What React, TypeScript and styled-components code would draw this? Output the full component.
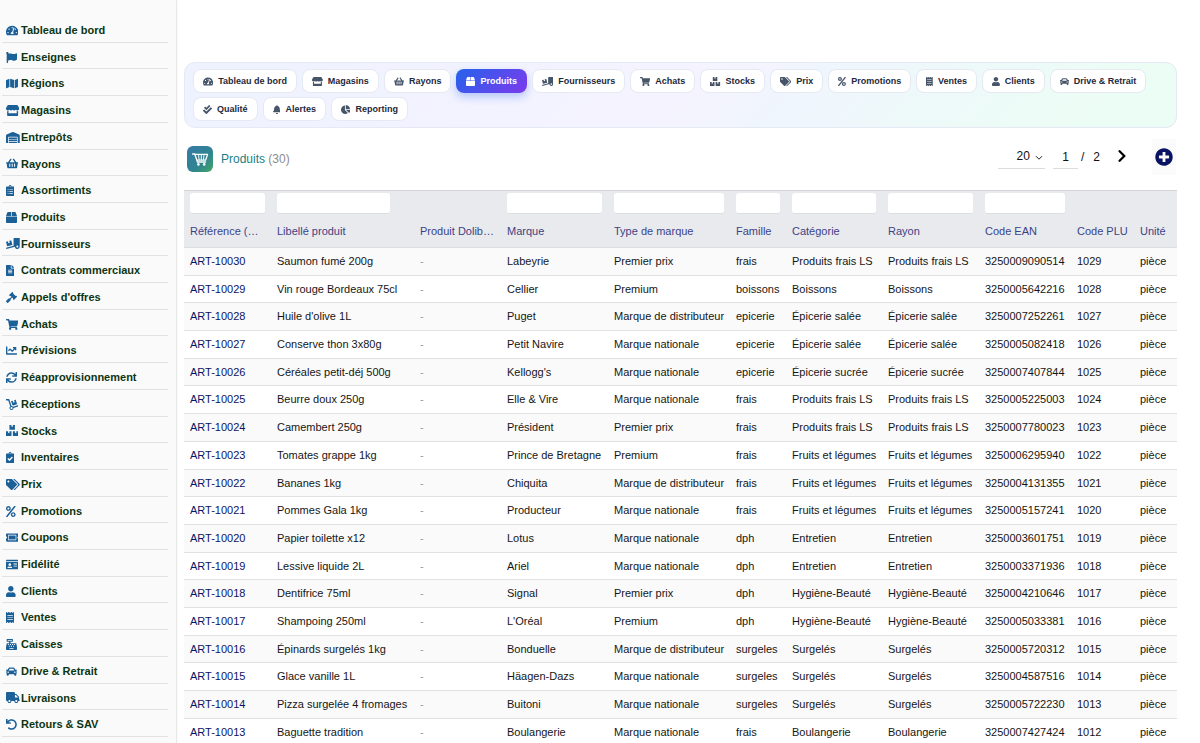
import React from "react";
import styled, { createGlobalStyle, css } from "styled-components";
import type { IconType } from "react-icons";
import {
  FaTachometerAlt, FaFlag, FaMap, FaStore, FaWarehouse, FaShoppingBasket, FaClipboardList, FaBox,
  FaTruckLoading, FaFileAlt, FaGavel, FaShoppingCart, FaChartLine, FaSync, FaDolly, FaBoxes,
  FaClipboardCheck, FaTags, FaPercent, FaTicketAlt, FaIdCard, FaUser, FaReceipt, FaCashRegister,
  FaCar, FaTruck, FaUndo, FaCheckDouble, FaBell, FaChartPie, FaChevronRight, FaPlusCircle,
} from "react-icons/fa";

const GlobalStyle = createGlobalStyle`
  * { box-sizing: border-box; }
  html { scrollbar-width: none; }
  body {
    margin: 0;
    background: #fff;
    color: #161616;
    font: 11px/1.7 "Liberation Sans", Arial, sans-serif;
  }
  a { color: inherit; text-decoration: none; }
  button, input, select { font: inherit; color: inherit; }
`;

const Shell = styled.div`
  display: flex;
  height: 100vh;
`;

const Sidebar = styled.nav`
  flex: 0 0 177px;
  display: flex;
  flex-direction: column;
  padding: 16px 8px 6px 2px;
  background: #fafafa;
  border-right: 1px solid #e9e9e9;
  box-shadow: 1px 0 2px rgba(0, 0, 0, 0.03);
`;

const SideLink = styled.a`
  flex: 1;
  display: flex;
  align-items: center;
  padding: 3px 0 0 4px;
  border-bottom: 1px solid #e2e2e2;
  color: #0c3512;
  font-weight: bold;
  white-space: nowrap;
`;

const SideIcon = styled.span`
  flex: 0 0 15px;
  display: flex;
  color: #1c6098;
`;

// Icon as wide as its own glyph; $units is the glyph's width on the 512-unit em square.
const Glyph = styled.span<{ $units: number }>`
  flex: none;
  display: flex;
  width: ${(p) => p.$units / 512}em;
  height: 1em;
  svg { width: 100%; height: 100%; }
`;

const Main = styled.main`
  flex: 1;
  min-width: 0;
  padding: 62px 23px 0 7px;
  overflow: hidden;
`;

const PillBar = styled.nav`
  display: flex;
  flex-wrap: wrap;
  gap: 4px 5px;
  padding: 6px 8px;
  border: 1px solid #e5e9f3;
  border-radius: 11px;
  background: linear-gradient(135deg, #eef2ff 0%, #f5f3ff 50%, #eff6fd 62%, #ecfdf5 90%);
`;

const Pill = styled.a<{ $active?: boolean }>`
  display: flex;
  align-items: center;
  gap: 5px;
  height: 24px;
  padding: 1px 9px 0;
  border: 1px solid #e5e9f2;
  border-radius: 8px;
  background: #fff;
  color: #1e293b;
  font-size: 9px;
  font-weight: bold;
  white-space: nowrap;
  svg { color: #475569; }
  ${(p) => p.$active && css`
    border-color: transparent;
    background: linear-gradient(135deg, #2563eb, #7c3aed) border-box;
    box-shadow: 0 4px 8px rgba(37, 99, 235, 0.3);
    color: #fff;
    svg { color: #fff; }
  `}
`;

const TitleBar = styled.header`
  display: flex;
  align-items: center;
  height: 62px;
  padding: 0 1px 0 3px;
`;

const Title = styled.h1`
  flex: 1;
  margin: 0 0 0 8px;
  color: #1b7f83;
  font-size: 12px;
  font-weight: normal;
  span { color: #8c8c8c; }
`;

const Pager = styled.form`
  display: flex;
  align-items: center;
  margin-bottom: 4px;
  color: #111;
  font-size: 12px;
`;

const SizePicker = styled.label`
  position: relative;
  display: flex;
  width: 47px;
  height: 24px;
  margin-right: 8px;
  border-bottom: 1px solid #dcdcdc;
  select {
    width: 100%;
    padding: 0 15px 0 0;
    border: 0;
    background: transparent;
    appearance: none;
    text-align: right;
    text-align-last: right;
  }
  svg {
    position: absolute;
    right: 2px;
    top: 10px;
    pointer-events: none;
  }
`;

const PageInput = styled.input`
  width: 25px;
  height: 24px;
  padding: 0;
  border: 0;
  border-bottom: 1px solid #dcdcdc;
  background: transparent;
  text-align: center;
`;

const PageCount = styled.span`
  display: flex;
  gap: 9px;
  padding-left: 3px;
`;

const IconButton = styled.button`
  display: grid;
  place-items: center;
  width: 24px;
  height: 36px;
  padding: 0;
  border: 0;
  background: transparent;
  cursor: pointer;
`;

const NextButton = styled(IconButton)`
  margin: 0 18px 0 10px;
  padding-bottom: 3px;
  color: #000;
`;

const AddButton = styled(IconButton)`
  background: #fbfbfb;
  color: #0a1464;
`;

const Table = styled.table`
  width: 100%;
  table-layout: fixed;
  border-collapse: separate;
  border-spacing: 0;
  th, td {
    padding: 4px 6px;
    white-space: nowrap;
    text-align: left;
    font-weight: normal;
  }
`;

const FilterRow = styled.tr`
  background: #e9eaee;
  td {
    height: 25px;
    padding: 2px 6px;
    border-top: 1px solid #d5d5d7;
    line-height: 0;
  }
`;

const FilterInput = styled.input`
  width: 100%;
  max-width: 113px;
  height: 21px;
  border: 0;
  border-bottom: 1px solid #dcdde0;
  border-radius: 3px;
  background: #fff;
`;

const HeadRow = styled.tr`
  background: #e9eaee;
  color: #3c4385;
  th {
    height: 32px;
    padding-bottom: 5px;
    border-bottom: 1px solid #dddee1;
  }
`;

const Row = styled.tr`
  &:nth-child(odd) { background: #fafafa; }
  td { border-bottom: 1px solid #e1e1e1; }
`;

const RefLink = styled.a`
  color: #0a1464;
`;

const Muted = styled.span`
  color: #999;
`;

type NavItem = [label: string, icon: IconType, units: number];

const sideItems: NavItem[] = [
  ["Tableau de bord", FaTachometerAlt, 576],
  ["Enseignes", FaFlag, 512],
  ["Régions", FaMap, 576],
  ["Magasins", FaStore, 616],
  ["Entrepôts", FaWarehouse, 640],
  ["Rayons", FaShoppingBasket, 576],
  ["Assortiments", FaClipboardList, 384],
  ["Produits", FaBox, 512],
  ["Fournisseurs", FaTruckLoading, 640],
  ["Contrats commerciaux", FaFileAlt, 384],
  ["Appels d'offres", FaGavel, 512],
  ["Achats", FaShoppingCart, 576],
  ["Prévisions", FaChartLine, 512],
  ["Réapprovisionnement", FaSync, 512],
  ["Réceptions", FaDolly, 576],
  ["Stocks", FaBoxes, 576],
  ["Inventaires", FaClipboardCheck, 384],
  ["Prix", FaTags, 640],
  ["Promotions", FaPercent, 448],
  ["Coupons", FaTicketAlt, 576],
  ["Fidélité", FaIdCard, 576],
  ["Clients", FaUser, 448],
  ["Ventes", FaReceipt, 384],
  ["Caisses", FaCashRegister, 512],
  ["Drive & Retrait", FaCar, 512],
  ["Livraisons", FaTruck, 640],
  ["Retours & SAV", FaUndo, 512],
];

const pills: NavItem[] = [
  ["Tableau de bord", FaTachometerAlt, 576],
  ["Magasins", FaStore, 616],
  ["Rayons", FaShoppingBasket, 576],
  ["Produits", FaBox, 512],
  ["Fournisseurs", FaTruckLoading, 640],
  ["Achats", FaShoppingCart, 576],
  ["Stocks", FaBoxes, 576],
  ["Prix", FaTags, 640],
  ["Promotions", FaPercent, 448],
  ["Ventes", FaReceipt, 384],
  ["Clients", FaUser, 448],
  ["Drive & Retrait", FaCar, 512],
  ["Qualité", FaCheckDouble, 512],
  ["Alertes", FaBell, 448],
  ["Reporting", FaChartPie, 544],
];

const columns: { label: string; width: number; filter: boolean }[] = [
  { label: "Référence (…", width: 87, filter: true },
  { label: "Libellé produit", width: 143, filter: true },
  { label: "Produit Dolib…", width: 87, filter: false },
  { label: "Marque", width: 107, filter: true },
  { label: "Type de marque", width: 122, filter: true },
  { label: "Famille", width: 56, filter: true },
  { label: "Catégorie", width: 96, filter: true },
  { label: "Rayon", width: 97, filter: true },
  { label: "Code EAN", width: 92, filter: true },
  { label: "Code PLU", width: 63, filter: false },
  { label: "Unité", width: 43, filter: false },
];

// Reference number, label, brand, brand type, family, category, EAN; the PLU code is derived from the reference.
const products: [number, string, string, string, string, string, string][] = [
  [30, "Saumon fumé 200g", "Labeyrie", "Premier prix", "frais", "Produits frais LS", "3250009090514"],
  [29, "Vin rouge Bordeaux 75cl", "Cellier", "Premium", "boissons", "Boissons", "3250005642216"],
  [28, "Huile d'olive 1L", "Puget", "Marque de distributeur", "epicerie", "Épicerie salée", "3250007252261"],
  [27, "Conserve thon 3x80g", "Petit Navire", "Marque nationale", "epicerie", "Épicerie salée", "3250005082418"],
  [26, "Céréales petit-déj 500g", "Kellogg's", "Marque nationale", "epicerie", "Épicerie sucrée", "3250007407844"],
  [25, "Beurre doux 250g", "Elle & Vire", "Marque nationale", "frais", "Produits frais LS", "3250005225003"],
  [24, "Camembert 250g", "Président", "Premier prix", "frais", "Produits frais LS", "3250007780023"],
  [23, "Tomates grappe 1kg", "Prince de Bretagne", "Premium", "frais", "Fruits et légumes", "3250006295940"],
  [22, "Bananes 1kg", "Chiquita", "Marque de distributeur", "frais", "Fruits et légumes", "3250004131355"],
  [21, "Pommes Gala 1kg", "Producteur", "Marque nationale", "frais", "Fruits et légumes", "3250005157241"],
  [20, "Papier toilette x12", "Lotus", "Marque nationale", "dph", "Entretien", "3250003601751"],
  [19, "Lessive liquide 2L", "Ariel", "Marque nationale", "dph", "Entretien", "3250003371936"],
  [18, "Dentifrice 75ml", "Signal", "Premier prix", "dph", "Hygiène-Beauté", "3250004210646"],
  [17, "Shampoing 250ml", "L'Oréal", "Premium", "dph", "Hygiène-Beauté", "3250005033381"],
  [16, "Épinards surgelés 1kg", "Bonduelle", "Marque de distributeur", "surgeles", "Surgelés", "3250005720312"],
  [15, "Glace vanille 1L", "Häagen-Dazs", "Marque nationale", "surgeles", "Surgelés", "3250004587516"],
  [14, "Pizza surgelée 4 fromages", "Buitoni", "Marque nationale", "surgeles", "Surgelés", "3250005722230"],
  [13, "Baguette tradition", "Boulangerie", "Marque nationale", "frais", "Boulangerie", "3250007427424"],
];

const CartBadge = () => (
  <svg width="26" height="26" viewBox="0 0 26 26" fill="none" aria-hidden="true">
    <defs>
      <linearGradient id="cartFill" x1="0" y1="0" x2="1" y2="1">
        <stop offset="0" stopColor="#3879a6" />
        <stop offset="0.6" stopColor="#2f8590" />
        <stop offset="1" stopColor="#43a863" />
      </linearGradient>
    </defs>
    <rect width="26" height="26" rx="6" fill="url(#cartFill)" />
    <path d="M5.6 8h2.2l2.6 8h8.2M7.8 8.4h12.8l-2 5.8H9.8" stroke="#fff" strokeWidth="1.3" strokeLinecap="round" strokeLinejoin="round" />
    <path d="M11.6 9l.5 5M14.3 9v5M17 9l-.5 5" stroke="#fff" strokeWidth="1" />
    <circle cx="11.4" cy="18.4" r="1.3" fill="#fff" />
    <circle cx="17.2" cy="18.4" r="1.3" fill="#fff" />
  </svg>
);

export default function App() {
  return (
    <>
      <GlobalStyle />
      <Shell>
        <Sidebar aria-label="Menu principal">
          {sideItems.map(([label, Icon, units]) => (
            <SideLink href="#" key={label}>
              <SideIcon><Glyph $units={units}><Icon /></Glyph></SideIcon>
              {label}
            </SideLink>
          ))}
        </Sidebar>
        <Main>
          <PillBar aria-label="Modules">
            {pills.map(([label, Icon, units]) => (
              <Pill href="#" key={label} $active={label === "Produits"}>
                <Glyph $units={units}><Icon /></Glyph>
                {label}
              </Pill>
            ))}
          </PillBar>
          <TitleBar>
            <CartBadge />
            <Title>Produits <span>(30)</span></Title>
            <Pager onSubmit={(e) => e.preventDefault()}>
              <SizePicker>
                <select aria-label="Lignes par page" defaultValue="20">
                  <option>20</option>
                  <option>50</option>
                </select>
                <svg width="8" height="6" viewBox="0 0 8 6" fill="none" stroke="#222" aria-hidden="true">
                  <path d="M1 1.2l3 3 3-3" />
                </svg>
              </SizePicker>
              <PageInput aria-label="Page" defaultValue="1" />
              <PageCount><span>/</span><span>2</span></PageCount>
              <NextButton type="button" aria-label="Page suivante"><FaChevronRight size={14} /></NextButton>
              <AddButton type="button" aria-label="Nouveau produit"><FaPlusCircle size={18} /></AddButton>
            </Pager>
          </TitleBar>
          <Table>
            <colgroup>
              {columns.map((c) => <col key={c.label} width={c.width} />)}
            </colgroup>
            <thead>
              <FilterRow>
                {columns.map((c) => (
                  <td key={c.label}>{c.filter && <FilterInput aria-label={c.label} />}</td>
                ))}
              </FilterRow>
              <HeadRow>
                {columns.map((c) => <th key={c.label} scope="col">{c.label}</th>)}
              </HeadRow>
            </thead>
            <tbody>
              {products.map(([n, name, brand, type, family, category, ean]) => (
                <Row key={n}>
                  <td><RefLink href="#">ART-{10000 + n}</RefLink></td>
                  <td>{name}</td>
                  <td><Muted>-</Muted></td>
                  <td>{brand}</td>
                  <td>{type}</td>
                  <td>{family}</td>
                  <td>{category}</td>
                  <td>{category}</td>
                  <td>{ean}</td>
                  <td>{999 + n}</td>
                  <td>pièce</td>
                </Row>
              ))}
            </tbody>
          </Table>
        </Main>
      </Shell>
    </>
  );
}
